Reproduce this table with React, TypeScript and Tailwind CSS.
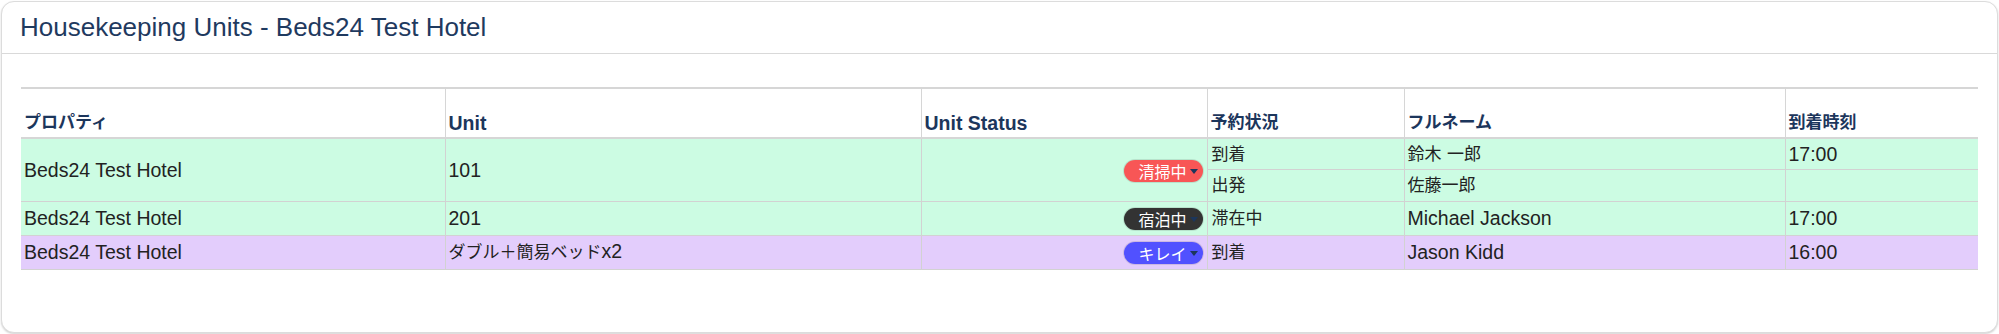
import React from 'react'

const CJK = /([\u3000-\u30ff\u3400-\u9fff\uff00-\uffef]+)/

// Latin and Japanese runs get different sizes so widths match the original
const Txt = ({ s }: { s: string }) => (
  <>
    {s.split(CJK).map((p, i) =>
      p === '' ? null : i % 2 === 1 ? (
        <span key={i} className="text-[17px]">{p}</span>
      ) : (
        <span key={i}>{p}</span>
      )
    )}
  </>
)

type Booking = { state: string; name: string; time: string; h: string }
type Unit = {
  property: string
  unit: string
  status: string
  badge: string
  bg: string
  bookings: Booking[]
}

const units: Unit[] = [
  {
    property: 'Beds24 Test Hotel',
    unit: '101',
    status: '清掃中',
    badge: 'bg-[#f85656]',
    bg: 'bg-[#ccfce3]',
    bookings: [
      { state: '到着', name: '鈴木 一郎', time: '17:00', h: 'h-[31px]' },
      { state: '出発', name: '佐藤一郎', time: '', h: 'h-[32px]' },
    ],
  },
  {
    property: 'Beds24 Test Hotel',
    unit: '201',
    status: '宿泊中',
    badge: 'bg-[#333333]',
    bg: 'bg-[#ccfce3]',
    bookings: [{ state: '滞在中', name: 'Michael Jackson', time: '17:00', h: 'h-[34px]' }],
  },
  {
    property: 'Beds24 Test Hotel',
    unit: 'ダブル＋簡易ベッドx2',
    status: 'キレイ',
    badge: 'bg-[#5151ff]',
    bg: 'bg-[#e3cdfc]',
    bookings: [{ state: '到着', name: 'Jason Kidd', time: '16:00', h: 'h-[34px]' }],
  },
]

const headers = ['プロパティ', 'Unit', 'Unit Status', '予約状況', 'フルネーム', '到着時刻']

const StatusBadge = ({ label, color }: { label: string; color: string }) => (
  <span
    className={`inline-flex items-center h-[22px] w-[79px] rounded-full pl-[15px] pr-[4px] whitespace-nowrap text-white ring-1 ring-black/10 align-middle ${color}`}
  >
    <span className="text-[16px] leading-[22px] font-['Noto_Sans_CJK_JP',sans-serif]">{label}</span>
    <svg width="8" height="5" viewBox="0 0 8 5" className="ml-[3px] mt-[2px] shrink-0">
      <polygon points="0,0 8,0 4,5" fill="#1c365c" />
    </svg>
  </span>
)

export default function App() {
  return (
    <div className="m-px h-[332px] rounded-[13px] border border-[#dcdcdc] bg-white shadow-[0_1px_2px_rgba(0,0,0,0.18)] font-['Liberation_Sans','Noto_Sans_CJK_JP',sans-serif]">
      <div className="flex h-[52px] items-center border-b border-[#d9d9d9] pl-[18px]">
        <h1 className="text-[26px] font-normal text-[#1f3a5f]">Housekeeping Units - Beds24 Test Hotel</h1>
      </div>
      <div className="px-[19px] pt-[33px]">
        <table className="w-full table-fixed border-collapse text-left text-[19.5px] leading-[22px] text-[#222]">
          <colgroup>
            <col className="w-[424px]" />
            <col className="w-[476px]" />
            <col className="w-[286px]" />
            <col className="w-[197px]" />
            <col className="w-[381px]" />
            <col />
          </colgroup>
          <thead>
            <tr className="h-[50px]">
              {headers.map((h, i) => (
                <th
                  key={h}
                  className={`border-t-2 border-b-2 border-[#d6d6d6] px-[3px] pb-[3px] align-bottom font-bold text-[#1c365c] ${i > 0 ? 'border-l' : ''}`}
                >
                  <Txt s={h} />
                </th>
              ))}
            </tr>
          </thead>
          <tbody>
            {units.map((u) =>
              u.bookings.map((b, j) => (
                <tr key={u.unit + j} className={`${u.bg} ${b.h}`}>
                  {j === 0 && (
                    <>
                      <td rowSpan={u.bookings.length} className="border-b border-[#d2d2d2] px-[3px] align-middle">
                        <Txt s={u.property} />
                      </td>
                      <td rowSpan={u.bookings.length} className="border-b border-l border-[#d2d2d2] px-[3px] align-middle">
                        <Txt s={u.unit} />
                      </td>
                      <td rowSpan={u.bookings.length} className="border-b border-l border-[#d2d2d2] pl-[3px] pr-[4px] text-right align-middle">
                        <StatusBadge label={u.status} color={u.badge} />
                      </td>
                    </>
                  )}
                  <td className="border-b border-l border-[#d2d2d2] px-[4px] align-middle">
                    <Txt s={b.state} />
                  </td>
                  <td className="border-b border-l border-[#d2d2d2] px-[3px] align-middle">
                    <Txt s={b.name} />
                  </td>
                  <td className="border-b border-l border-[#d2d2d2] px-[3px] align-middle">
                    <Txt s={b.time} />
                  </td>
                </tr>
              ))
            )}
          </tbody>
        </table>
      </div>
    </div>
  )
}
